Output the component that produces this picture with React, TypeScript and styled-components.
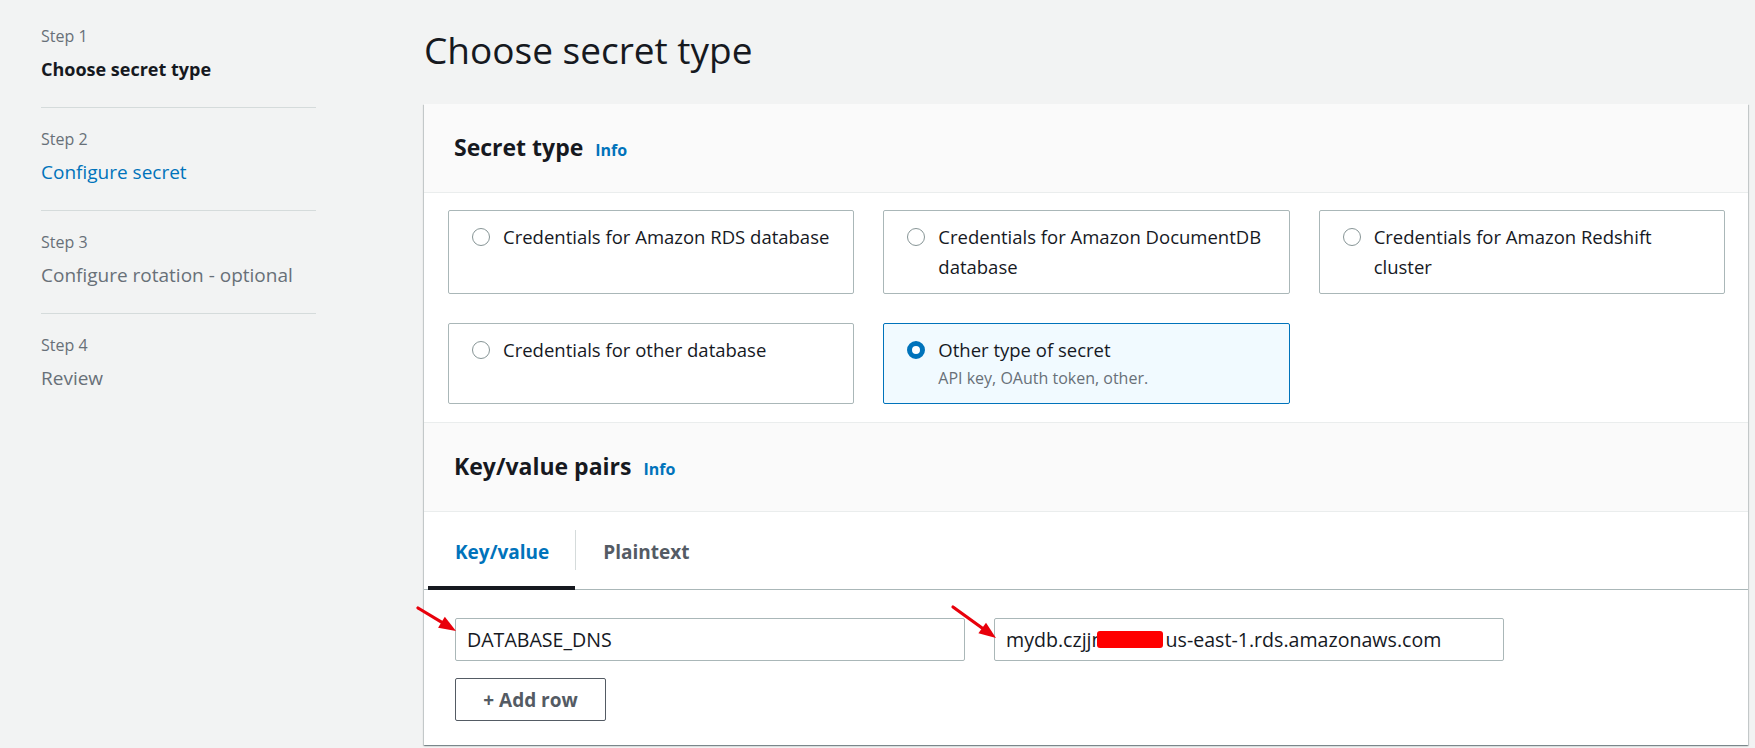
import React from "react";
import styled, { createGlobalStyle } from "styled-components";

const GlobalStyle = createGlobalStyle`
  html, body {
    margin: 0;
    padding: 0;
    background: #f2f3f3;
    font-family: "Open Sans", "Noto Sans", "Liberation Sans", sans-serif;
    color: #16191f;
  }
  * { box-sizing: border-box; }
`;

const Page = styled.div`
  display: grid;
  grid-template-columns: 275px 1fr;
  column-gap: 108px;
  padding: 5px 7px 0 41px;
  min-height: 748px;
  overflow: hidden;
`;

const StepNav = styled.nav`
  display: flex;
  flex-direction: column;
`;

const StepItem = styled.div<{ $last?: boolean }>`
  padding: 20px 0 23px;
  border-bottom: ${(p) => (p.$last ? "none" : "1px solid #d5dbdb")};
`;

const StepLabel = styled.div`
  font-size: 16px;
  line-height: 22px;
  color: #687078;
`;

const StepTitle = styled.div<{ $state: "current" | "link" | "disabled" }>`
  margin-top: 7px;
  font-size: ${(p) => (p.$state === "current" ? "18px" : "19px")};
  line-height: 30px;
  font-weight: ${(p) => (p.$state === "current" ? 700 : 400)};
  color: ${(p) =>
    p.$state === "current" ? "#16191f" : p.$state === "link" ? "#0073bb" : "#687078"};
`;

const Main = styled.main`
  display: flex;
  flex-direction: column;
  min-width: 0;
`;

const Title = styled.h1`
  margin: 23px 0 32px;
  font-size: 37px;
  line-height: 44px;
  font-weight: 400;
  color: #16191f;
`;

const Container = styled.section`
  background: #ffffff;
  box-shadow: 0 1px 1px 0 rgba(0, 28, 36, 0.3), 1px 1px 1px 0 rgba(0, 28, 36, 0.15),
    -1px 1px 1px 0 rgba(0, 28, 36, 0.15);
`;

const SectionHeader = styled.div<{ $divided?: boolean }>`
  display: flex;
  align-items: baseline;
  gap: 12px;
  padding: 28px 30px 30px;
  background: #fafafa;
  border-top: ${(p) => (p.$divided ? "1px solid #eaeded" : "none")};
  border-bottom: 1px solid #eaeded;
`;

const SectionTitle = styled.h2`
  margin: 0;
  font-size: 23px;
  line-height: 30px;
  font-weight: 700;
  color: #16191f;
`;

const InfoLink = styled.a`
  font-size: 16px;
  line-height: 22px;
  font-weight: 700;
  color: #0073bb;
  text-decoration: none;
`;

const TileBody = styled.div`
  padding: 17px 23px 18px 24px;
`;

const TileGrid = styled.div`
  display: grid;
  grid-template-columns: repeat(3, 1fr);
  gap: 29px;
`;

const Tile = styled.label<{ $selected?: boolean }>`
  display: flex;
  align-items: flex-start;
  gap: 13px;
  padding: 11px 18px 11px 23px;
  border: 1px solid ${(p) => (p.$selected ? "#0073bb" : "#aab7b8")};
  background: ${(p) => (p.$selected ? "#f1faff" : "#ffffff")};
  border-radius: 2px;
`;

const Radio = styled.span<{ $checked?: boolean }>`
  flex: none;
  width: 18px;
  height: 18px;
  margin-top: 6px;
  border-radius: 50%;
  background: #ffffff;
  border: ${(p) => (p.$checked ? "5px solid #0073bb" : "1.5px solid #879596")};
`;

const TileText = styled.div`
  display: flex;
  flex-direction: column;
`;

const TileTitle = styled.div`
  font-size: 18.5px;
  line-height: 30px;
  color: #16191f;
`;

const TileDescription = styled.div`
  margin: 2px 0 3px;
  font-size: 16px;
  line-height: 22px;
  color: #687078;
`;

const TabList = styled.div`
  display: flex;
  align-items: center;
  padding-left: 4px;
  border-bottom: 1px solid #aab7b8;
`;

const Tab = styled.div<{ $active?: boolean }>`
  position: relative;
  padding: 25px 26px 22px 27px;
  font-size: 19px;
  line-height: 30px;
  font-weight: 700;
  color: ${(p) => (p.$active ? "#0073bb" : "#545b64")};

  &::after {
    content: "";
    position: absolute;
    left: 0;
    right: 0;
    bottom: -1px;
    height: 4px;
    background: ${(p) => (p.$active ? "#16191f" : "transparent")};
  }
`;

const TabDivider = styled.span`
  width: 1px;
  height: 40px;
  background: #d5dbdb;
  margin-bottom: 2px;
`;

const KvBody = styled.div`
  padding: 28px 31px 24px;
  display: flex;
  flex-direction: column;
  gap: 17px;
`;

const KvRow = styled.div`
  display: grid;
  grid-template-columns: 510px 510px;
  column-gap: 29px;
`;

const FieldWrap = styled.div`
  position: relative;
`;

const Field = styled.div`
  display: flex;
  align-items: center;
  height: 43px;
  padding: 0 11px;
  border: 1px solid #aab7b8;
  border-radius: 2px;
  background: #ffffff;
  font-size: 19.6px;
  line-height: 30px;
  color: #16191f;
  white-space: nowrap;
`;

const Redaction = styled.span`
  display: inline-block;
  width: 66px;
  height: 17px;
  margin: 0 3px 0 -7px;
  border-radius: 3px;
  background: #ff0000;
`;

const AddButton = styled.button`
  align-self: flex-start;
  width: 151px;
  height: 43px;
  border: 1px solid #545b64;
  border-radius: 2px;
  background: #ffffff;
  font-family: inherit;
  font-size: 19px;
  font-weight: 700;
  color: #545b64;
  cursor: pointer;
`;

const ArrowSvg = styled.svg`
  position: absolute;
  pointer-events: none;
  overflow: visible;
`;

function Arrow({ dx, dy, left, top }: { dx: number; dy: number; left: number; top: number }) {
  const L = Math.hypot(dx, dy);
  const ux = dx / L;
  const uy = dy / L;
  const tx = 3 + dx;
  const ty = 3 + dy;
  const bx = tx - 17 * ux;
  const by = ty - 17 * uy;
  const px = -uy * 6.5;
  const py = ux * 6.5;
  return (
    <ArrowSvg width={dx + 6} height={dy + 6} style={{ left, top }}>
      <line x1={3} y1={3} x2={bx + 2 * ux} y2={by + 2 * uy} stroke="#e8000b" strokeWidth={3.2} strokeLinecap="round" />
      <polygon
        points={`${tx},${ty} ${bx + px},${by + py} ${bx - px},${by - py}`}
        fill="#e8000b"
      />
    </ArrowSvg>
  );
}

const steps = [
  { label: "Step 1", title: "Choose secret type", state: "current" as const },
  { label: "Step 2", title: "Configure secret", state: "link" as const },
  { label: "Step 3", title: "Configure rotation - optional", state: "disabled" as const },
  { label: "Step 4", title: "Review", state: "disabled" as const },
];

const tiles = [
  { title: "Credentials for Amazon RDS database" },
  { title: "Credentials for Amazon DocumentDB database" },
  { title: "Credentials for Amazon Redshift cluster" },
  { title: "Credentials for other database" },
  { title: "Other type of secret", description: "API key, OAuth token, other.", selected: true },
];

export default function App() {
  return (
    <>
      <GlobalStyle />
      <Page>
        <StepNav>
          {steps.map((s, i) => (
            <StepItem key={s.label} $last={i === steps.length - 1}>
              <StepLabel>{s.label}</StepLabel>
              <StepTitle $state={s.state}>{s.title}</StepTitle>
            </StepItem>
          ))}
        </StepNav>
        <Main>
          <Title>Choose secret type</Title>
          <Container>
            <SectionHeader>
              <SectionTitle>Secret type</SectionTitle>
              <InfoLink>Info</InfoLink>
            </SectionHeader>
            <TileBody>
              <TileGrid>
                {tiles.map((t) => (
                  <Tile key={t.title} $selected={t.selected}>
                    <Radio $checked={t.selected} />
                    <TileText>
                      <TileTitle>{t.title}</TileTitle>
                      {t.description && <TileDescription>{t.description}</TileDescription>}
                    </TileText>
                  </Tile>
                ))}
              </TileGrid>
            </TileBody>
            <SectionHeader $divided>
              <SectionTitle>Key/value pairs</SectionTitle>
              <InfoLink>Info</InfoLink>
            </SectionHeader>
            <TabList>
              <Tab $active>Key/value</Tab>
              <TabDivider />
              <Tab>Plaintext</Tab>
            </TabList>
            <KvBody>
              <KvRow>
                <FieldWrap>
                  <Field>DATABASE_DNS</Field>
                  <Arrow dx={38} dy={23} left={-40} top={-13} />
                </FieldWrap>
                <FieldWrap>
                  <Field>
                    mydb.czjjn
                    <Redaction />
                    us-east-1.rds.amazonaws.com
                  </Field>
                  <Arrow dx={43} dy={31} left={-44} top={-14} />
                </FieldWrap>
              </KvRow>
              <AddButton>+ Add row</AddButton>
            </KvBody>
          </Container>
        </Main>
      </Page>
    </>
  );
}
